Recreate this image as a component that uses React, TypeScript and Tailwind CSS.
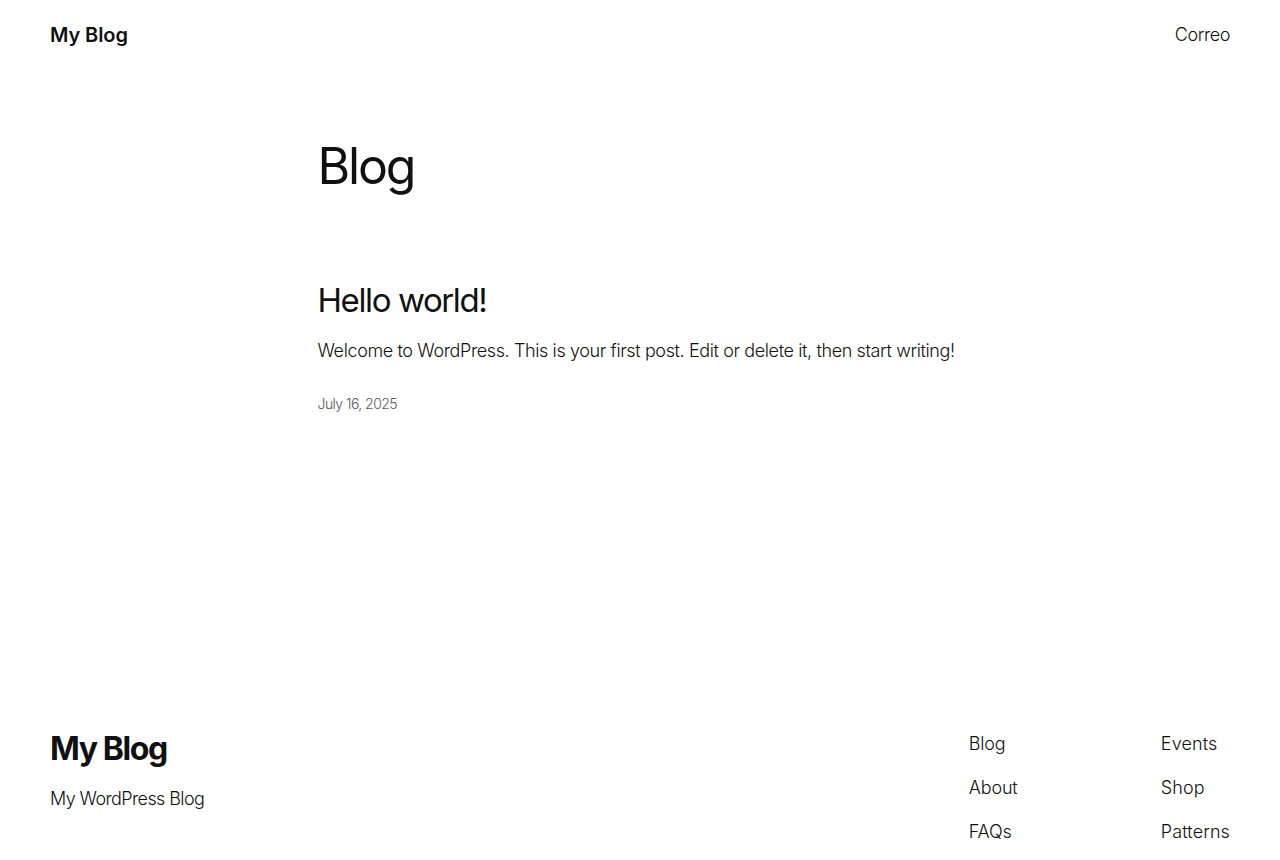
const footerLinksLeft = ["Blog", "About", "FAQs"];
const footerLinksRight = ["Events", "Shop", "Patterns"];

const App = () => {
  return (
    <div className="min-h-[860px] w-full bg-white text-[#111111] font-['Inter',sans-serif]">
      <header className="flex items-center justify-between px-[50px] pt-[22px]">
        <a className="text-[20px] font-semibold tracking-[-0.1px] leading-[26px]">My Blog</a>
        <nav>
          <a className="text-[18px] font-light tracking-[-0.4px] leading-[26px]">Correo</a>
        </nav>
      </header>

      <main className="mx-auto w-[645px] pt-[86px]">
        <h1 className="text-[50px] font-normal tracking-[-2.2px] leading-[64px]">Blog</h1>

        <article className="mt-[82px]">
          <h2 className="text-[33px] font-normal tracking-[-1.4px] leading-[40px]">
            Hello world!
          </h2>
          <p className="mt-[17px] text-[18px] font-light tracking-[-0.38px] leading-[28px]">
            Welcome to WordPress. This is your first post. Edit or delete it, then start writing!
          </p>
          <p className="mt-[29px] text-[14px] font-light tracking-[-0.55px] leading-[20px] text-[#5a5a5a]">
            July 16, 2025
          </p>
        </article>
      </main>

      <footer className="mt-[315px] flex justify-between px-[50px]">
        <div>
          <h2 className="text-[32px] font-bold tracking-[-1.4px] leading-[40px]">My Blog</h2>
          <p className="mt-[17px] text-[18px] font-light tracking-[-0.6px] leading-[26px]">
            My WordPress Blog
          </p>
        </div>
        <div className="grid grid-cols-[192px_auto] pt-[2px]">
          <ul className="flex flex-col gap-[18px]">
            {footerLinksLeft.map((l) => (
              <li key={l} className="text-[18px] font-light tracking-[-0.2px] leading-[26px]">
                {l}
              </li>
            ))}
          </ul>
          <ul className="flex flex-col gap-[18px]">
            {footerLinksRight.map((l) => (
              <li key={l} className="text-[18px] font-light tracking-[0.1px] leading-[26px]">
                {l}
              </li>
            ))}
          </ul>
        </div>
      </footer>
    </div>
  );
};

export default App;
